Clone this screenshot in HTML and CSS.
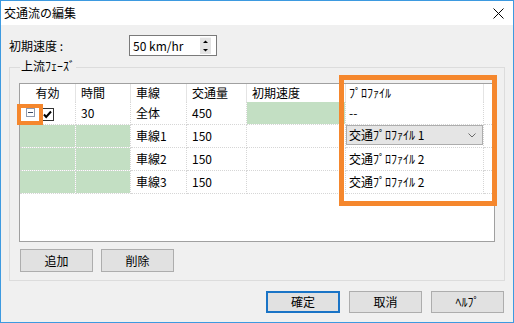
FILE: index.html
```html
<!DOCTYPE html>
<html lang="ja">
<head>
<meta charset="utf-8">
<title>交通流の編集</title>
<link rel="stylesheet" href="styles.css">
</head>
<body>
<div class="window">
  <div class="titlebar">
    <span class="title">交通流の編集</span>
    <svg class="close" width="11" height="11" viewBox="0 0 11 11"><path d="M0.5 0.5 L10.5 10.5 M10.5 0.5 L0.5 10.5" stroke="#000" stroke-width="1" fill="none"/></svg>
  </div>
  <div class="body">
    <div class="speed-row">
      <span class="label">初期速度 :</span>
      <div class="spin">
        <span class="spin-value">50 km/hr</span>
        <div class="spin-btns">
          <svg width="11" height="8" viewBox="0 0 11 8"><path d="M3 5 L8 5 L5.5 2.5 Z" fill="#000"/></svg>
          <svg width="11" height="8" viewBox="0 0 11 8"><path d="M3 3 L8 3 L5.5 5.5 Z" fill="#000"/></svg>
        </div>
      </div>
    </div>

    <div class="group">
      <span class="legend">上流ﾌｪｰｽﾞ</span>
      <div class="grid">
        <div class="cell head center">有効</div>
        <div class="cell head">時間</div>
        <div class="cell head">車線</div>
        <div class="cell head">交通量</div>
        <div class="cell head">初期速度</div>
        <div class="cell head prof">ﾌﾟﾛﾌｧｲﾙ</div>
        <div class="cell head filler"></div>

        <div class="cell first">
          <svg class="expander" width="9" height="9" viewBox="0 0 9 9"><rect x="0.5" y="0.5" width="8" height="8" fill="#fff" stroke="#8e99ad"/><path d="M2 4.5 L7 4.5" stroke="#3d4b66" stroke-width="1"/></svg>
          <svg class="check" width="13" height="13" viewBox="0 0 13 13"><rect x="0.5" y="0.5" width="12" height="12" fill="#fff" stroke="#333"/><path d="M3 6.5 L5.2 9 L10 3.5" stroke="#000" stroke-width="2" fill="none"/></svg>
        </div>
        <div class="cell">30</div>
        <div class="cell">全体</div>
        <div class="cell">450</div>
        <div class="cell green"></div>
        <div class="cell prof">--</div>
        <div class="cell filler"></div>

        <div class="cell green"></div>
        <div class="cell green"></div>
        <div class="cell">車線1</div>
        <div class="cell">150</div>
        <div class="cell"></div>
        <div class="cell prof combo-cell">
          <div class="combo"><span>交通ﾌﾟﾛﾌｧｲﾙ 1</span><svg width="8" height="5" viewBox="0 0 8 5"><path d="M0.5 0.5 L4 4 L7.5 0.5" stroke="#6a6a6a" fill="none"/></svg></div>
        </div>
        <div class="cell filler"></div>

        <div class="cell green"></div>
        <div class="cell green"></div>
        <div class="cell">車線2</div>
        <div class="cell">150</div>
        <div class="cell"></div>
        <div class="cell prof">交通ﾌﾟﾛﾌｧｲﾙ 2</div>
        <div class="cell filler"></div>

        <div class="cell green"></div>
        <div class="cell green"></div>
        <div class="cell">車線3</div>
        <div class="cell">150</div>
        <div class="cell"></div>
        <div class="cell prof">交通ﾌﾟﾛﾌｧｲﾙ 2</div>
        <div class="cell filler"></div>
      </div>
      <div class="group-buttons">
        <button class="btn">追加</button>
        <button class="btn">削除</button>
      </div>
    </div>

    <div class="footer">
      <button class="btn primary">確定</button>
      <button class="btn">取消</button>
      <button class="btn">ﾍﾙﾌﾟ</button>
    </div>
  </div>

  <div class="mark mark-small"></div>
  <div class="mark mark-big"></div>
</div>
</body>
</html>
```

FILE: styles.css
```css
* { box-sizing: border-box; }
html, body { margin: 0; padding: 0; }
body {
  width: 514px;
  height: 323px;
  overflow: hidden;
  font-family: "Noto Sans CJK JP", "Noto Sans", sans-serif;
  font-size: 12px;
  color: #000;
  background: #f0f0f0;
}
.window {
  position: relative;
  width: 514px;
  height: 323px;
  border: 1px solid #3d9ae0;
  background: #f0f0f0;
  display: flex;
  flex-direction: column;
}
.titlebar {
  height: 24px;
  background: #fff;
  display: flex;
  align-items: center;
  justify-content: space-between;
  padding: 0 9px 0 3px;
  line-height: 14px;
}
.body {
  display: flex;
  flex-direction: column;
  padding: 10px 8px 0 8px;
}
.speed-row {
  display: flex;
  align-items: center;
  height: 21px;
  line-height: 14px;
}
.label { width: 120px; }
.spin {
  width: 88px;
  height: 21px;
  border: 1px solid #7a7a7a;
  background: #fff;
  display: flex;
  align-items: center;
  justify-content: space-between;
  padding: 0 5px 0 3px;
}
.spin-btns {
  width: 11px;
  height: 17px;
  display: flex;
  flex-direction: column;
  justify-content: space-between;
  background: #e3e3e3;
  border-top: 1px solid #f4f4f4;
}
.spin-btns svg { display: block; }

.group {
  position: relative;
  margin-top: 11px;
  border: 1px solid #dcdcdc;
  padding: 15px 9px 8px 9px;
}
.legend {
  position: absolute;
  top: -9px;
  left: 10px;
  padding: 0 1px;
  line-height: 14px;
  background: #f0f0f0;
}
.grid {
  height: 159px;
  border: 1px solid #a0a0a0;
  background: #fff;
  display: grid;
  grid-template-columns: 56px 55px 56px 60px 99px 138px 1fr;
  grid-template-rows: 18px repeat(4, 23px);
  align-content: start;
  line-height: 14px;
}
.cell {
  display: flex;
  align-items: center;
  padding-left: 5px;
  border-right: 1px dotted #d6d6d6;
  border-bottom: 1px dotted #d6d6d6;
  background-clip: padding-box;
  white-space: nowrap;
}
.head {
  border-bottom: none;
  border-right: 1px solid #e4e4e4;
}
.head.center { justify-content: center; padding-left: 0; }
.prof { padding-left: 3px; }
.filler { border-right: none; }
.green { background-color: #c3dfc3; }
.first { padding-left: 6px; align-items: flex-start; padding-top: 6px; }
.first svg { display: block; }
.check { margin-left: 6px; }
.combo-cell { padding-left: 0; align-items: flex-start; }
.combo {
  width: 100%;
  height: 20px;
  border: 1px solid #adadad;
  background: #e5e5e5;
  display: flex;
  align-items: center;
  justify-content: space-between;
  padding: 0 6px 0 2px;
}
.combo svg { display: block; }

.group-buttons {
  display: flex;
  gap: 8px;
  margin-top: 7px;
  padding-left: 1px;
}
.btn {
  width: 73px;
  height: 23px;
  border: 1px solid #adadad;
  background: #e1e1e1;
  font: inherit;
  color: #000;
  display: flex;
  align-items: center;
  justify-content: center;
  padding: 0;
  line-height: 14px;
}
.footer {
  display: flex;
  justify-content: flex-end;
  gap: 9px;
  margin-top: 10px;
  margin-right: 1px;
}
.footer .btn { height: 22px; }
.primary { width: 74px; border: 2px solid #1a74c6; }

.mark {
  position: absolute;
  border-style: solid;
  border-color: #f5872d;
}
.mark-small {
  left: 16px;
  top: 103px;
  width: 26px;
  height: 21px;
  border-width: 4px;
}
.mark-big {
  left: 338px;
  top: 74px;
  width: 158px;
  height: 131px;
  border-width: 5px;
}
```
